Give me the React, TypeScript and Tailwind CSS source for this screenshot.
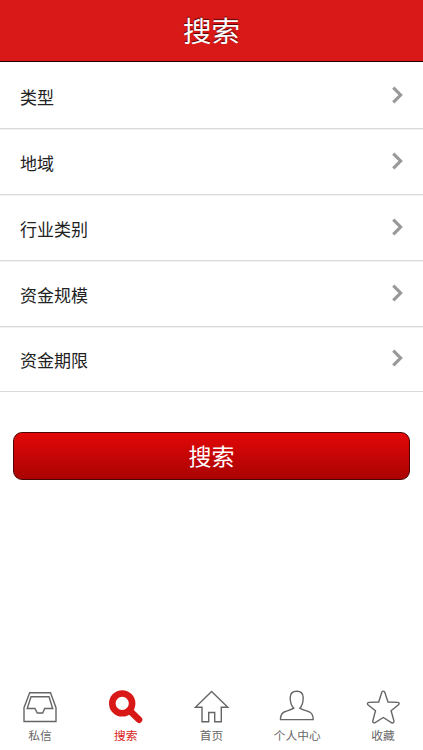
import type { ReactNode } from 'react';

const filters = ['类型', '地域', '行业类别', '资金规模', '资金期限'];

interface Tab {
  label: string;
  active?: boolean;
  icon: ReactNode;
}

const tabs: Tab[] = [
  {
    label: '私信',
    icon: (
      <>
        <path d="M9.7 4.8H30.5L36 19.7V33.5H4V19.7Z" />
        <path d="M11 8.7H29L32.7 20.5H24.7L22.7 25H17.3L15 20.5H7.2Z" />
      </>
    ),
  },
  {
    label: '搜索',
    active: true,
    icon: (
      <>
        <circle cx="16.2" cy="15.4" r="9.9" strokeWidth="6.6" />
        <path d="M23.7 22.7L33 31.7" strokeWidth="6.6" strokeLinecap="round" />
      </>
    ),
  },
  {
    label: '首页',
    icon: <path d="M19.6 3.5L35.8 19.3H29.3V33.8H22.7V24.5H16.7V33.8H10V19.3H3.4Z" />,
  },
  {
    label: '个人中心',
    icon: (
      <path d="M16.8 20.2C14.5 18 13.2 13.5 13.2 9.5C13.2 5 15.8 3.2 19.8 3.2C23.8 3.2 26.2 5 26.2 9.5C26.2 13.5 25 18 22.8 20.2C25.5 22 29.5 22.7 32.5 24C35 25.3 36.2 28.5 36.2 31.6H3.5C3.5 28.5 4.5 25.3 7.2 24C10 22.7 14 22 16.8 20.2Z" />
    ),
  },
  {
    label: '收藏',
    icon: (
      <path d="M18.8 4.2Q20.3 2 21.8 4.2L25 14L34.8 14.4Q37.2 15 35.5 16.8L28.1 22.7L31 33Q31 35.5 28.7 34.8L20.3 29.5L11.8 34.8Q9.5 35.3 9.8 33L12.5 22.7L4.9 16.8Q3.6 15 5.8 14.4L15.7 14Z" />
    ),
  },
];

export default function App() {
  return (
    <div className="flex h-[750px] w-full flex-col bg-white font-['Liberation_Sans','Noto_Sans_CJK_SC',sans-serif]">
      {/* Header */}
      <header className="flex h-[62px] shrink-0 items-center justify-center border-b border-[#1c0000] bg-[#d91918] pt-[3px]">
        <h1 className="text-[28.5px] leading-none text-white [text-shadow:0_-1px_1px_rgba(50,0,0,0.85)]">
          搜索
        </h1>
      </header>

      {/* Filters */}
      <ul className="pt-px">
        {filters.map((label) => (
          <li
            key={label}
            className="flex h-[66px] items-center justify-between border-b border-[#dadada] pr-5 pl-5 shadow-[0_1px_0_#f1f1f1] last:h-[65px] last:shadow-none"
          >
            <span className="pt-[5px] text-[17px] leading-none text-[#222]">{label}</span>
            <svg
              className="mb-0.5"
              width="12"
              height="18"
              viewBox="0 0 12 18"
              fill="none"
              stroke="#999"
              strokeWidth="3.2"
            >
              <path d="M2.3 1.6L9.6 9L2.3 16.4" />
            </svg>
          </li>
        ))}
      </ul>

      <button className="mx-[13px] mt-10 flex h-12 shrink-0 items-center justify-center rounded-[9px] border border-[#4d0506] bg-linear-to-b from-[#e30808] to-[#aa0303] pt-0.5 text-[23px] leading-none text-white">
        搜索
      </button>

      {/* Tab bar */}
      <nav className="mt-auto flex h-[62px] justify-between px-[10px]">
        {tabs.map(({ label, active, icon }) => (
          <a
            key={label}
            className={`flex w-[60px] flex-col items-center ${active ? 'text-[#d91918]' : 'text-[#666]'}`}
          >
            <svg
              width="40"
              height="40"
              viewBox="0 0 40 40"
              fill="none"
              stroke="currentColor"
              strokeWidth="1.4"
            >
              {icon}
            </svg>
            <span className="mt-0.5 text-[11.7px] leading-none">{label}</span>
          </a>
        ))}
      </nav>
    </div>
  );
}
